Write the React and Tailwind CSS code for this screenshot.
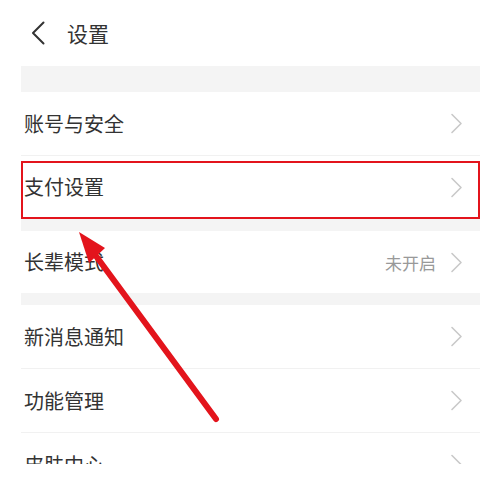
import React from 'react';

const FONT = { fontFamily: '"Noto Sans CJK SC", "Noto Sans", sans-serif' };

function Chevron() {
  return (
    <svg width="13" height="21" viewBox="0 0 13 21" className="shrink-0">
      <path d="M2 1.5 L11 10.5 L2 19.5" fill="none" stroke="#c9c9c9" strokeWidth="1.6" strokeLinecap="round" strokeLinejoin="round" />
    </svg>
  );
}

function Row({ label, value, h = 'h-[63px]', divider, children }) {
  return (
    <div className={`relative flex items-center ${h} ${divider ? 'border-b border-[#f1f1f1]' : ''}`}>
      <span className="pl-[3px] text-[20px] leading-none text-[#333]">{label}</span>
      <div className="ml-auto flex items-center gap-[14px] pr-[17px]">
        {value && <span className="text-[17px] leading-none text-[#999]">{value}</span>}
        <Chevron />
      </div>
      {children}
    </div>
  );
}

export default function App() {
  return (
    <div className="relative h-[485px] w-full overflow-hidden bg-white" style={FONT}>
      <div className="h-[464px] overflow-hidden">
        {/* header */}
        <div className="flex h-[66px] items-center pl-[31px]">
          <svg width="14" height="24" viewBox="0 0 14 24">
            <path d="M12.5 1.5 L2 12 L12.5 22.5" fill="none" stroke="#333" strokeWidth="2" strokeLinecap="round" strokeLinejoin="round" />
          </svg>
          <span className="ml-[22px] text-[21px] leading-none text-[#333]">设置</span>
        </div>

        <div className="ml-[21px] mr-[24px]">
          <div className="h-[26px] bg-[#f4f4f4]" />
          <Row label="账号与安全" h="h-[64px]" divider />
          <Row label="支付设置" h="h-[62px]">
            <div className="absolute left-0 right-0 top-[5px] bottom-[-1px] border-2 border-[#e3141c]" />
          </Row>
          <div className="h-[13px] bg-[#f4f4f4]" />
          <Row label="长辈模式" value="未开启" h="h-[62px]" />
          <div className="h-[12px] bg-[#f4f4f4]" />
          <Row label="新消息通知" h="h-[64px]" divider />
          <Row label="功能管理" h="h-[64px]" divider />
          <Row label="皮肤中心" h="h-[63px]" />
        </div>
      </div>

      {/* annotation arrow */}
      <svg className="pointer-events-none absolute inset-0" width="504" height="485" viewBox="0 0 504 485">
        <line x1="216" y1="419" x2="96" y2="256" stroke="#e3141c" strokeWidth="6" strokeLinecap="round" />
        <polygon points="79,232 105,248 89,263" fill="#e3141c" />
      </svg>
    </div>
  );
}
